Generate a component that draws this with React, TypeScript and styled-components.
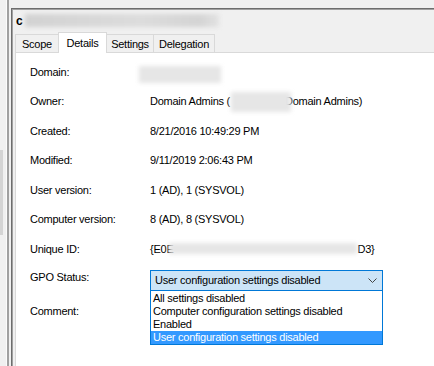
import React from "react";
import styled, { createGlobalStyle } from "styled-components";

const GlobalStyle = createGlobalStyle`
  html, body { margin: 0; padding: 0; background: #f0f0f0; }
  body {
    font-family: "Liberation Sans", Arial, sans-serif;
    font-size: 11px;
    letter-spacing: -0.25px;
    color: #000;
  }
  #root { width: 434px; height: 366px; overflow: hidden; }
`;

const Frame = styled.div`
  display: flex;
  width: 434px;
  height: 366px;
  overflow: hidden;
  background: #f0f0f0;
`;

const LeftPane = styled.div`
  width: 6px;
  flex-shrink: 0;
  display: flex;
  flex-direction: column;
  background: #f0f0f0;
`;

const Thumb = styled.div`
  margin-top: 150px;
  width: 3px;
  height: 85px;
  background: #d4d4d4;
`;

const Splitter = styled.div`
  width: 4px;
  flex-shrink: 0;
  border-left: 1px solid #fbfbfb;
  background: linear-gradient(to right, #a0a0a0 0 2px, #f0f0f0 2px);
`;

const RightPane = styled.div`
  flex: 1;
  min-width: 0;
  margin-top: 8px;
  border-top: 1px solid #6d6d6d;
  border-left: 1px solid #6d6d6d;
  box-shadow: inset 1px 1px 0 #a0a0a0;
  padding-left: 3px;
  display: flex;
  flex-direction: column;
`;

const TitleRow = styled.div`
  height: 23px;
  display: flex;
  align-items: center;
  padding-left: 1px;
  font-size: 12px;
  font-weight: bold;
  letter-spacing: 0;
`;

const TitleBlur = styled.span`
  display: inline-block;
  width: 194px;
  height: 13px;
  margin-left: 2px;
  background: linear-gradient(to right, #d2d2d2, #dcdcdc 60%, #d4d4d4 90%, #e2e2e2);
  filter: blur(2px);
`;

const TabStrip = styled.div`
  height: 20px;
  display: flex;
  align-items: flex-end;
  position: relative;
  z-index: 1;
`;

const Tab = styled.div<{ $active?: boolean; $w: number }>`
  position: relative;
  z-index: ${(p) => (p.$active ? 2 : 1)};
  box-sizing: border-box;
  width: ${(p) => p.$w}px;
  height: ${(p) => (p.$active ? 21 : 18)}px;
  margin-bottom: ${(p) => (p.$active ? -1 : 0)}px;
  margin-right: -1px;
  border: 1px solid #d9d9d9;
  border-bottom: none;
  background: ${(p) => (p.$active ? "#ffffff" : "#f0f0f0")};
  display: flex;
  align-items: center;
  justify-content: center;
  font-size: 11px;
  white-space: nowrap;
`;

const Panel = styled.div`
  flex: 1;
  background: #ffffff;
  border-top: 1px solid #d9d9d9;
  border-left: 1px solid #d9d9d9;
  padding: 11.5px 0 0 14px;
  display: flex;
  flex-direction: column;
`;

const Row = styled.div<{ $h: number }>`
  display: grid;
  grid-template-columns: 120px auto;
  height: ${(p) => p.$h}px;
  align-items: start;
  line-height: 14px;
`;

const Label = styled.div`
  white-space: nowrap;
`;

const Value = styled.div`
  display: flex;
  align-items: flex-start;
  white-space: nowrap;
`;

const Blur = styled.span<{ $w: number; $h: number; $dx?: number; $dy?: number; $mr?: number }>`
  position: relative;
  z-index: 1;
  display: inline-block;
  flex-shrink: 0;
  width: ${(p) => p.$w}px;
  height: ${(p) => p.$h}px;
  margin-left: ${(p) => p.$dx ?? 0}px;
  margin-top: ${(p) => p.$dy ?? 0}px;
  margin-right: ${(p) => p.$mr ?? 0}px;
  background: #e6e6e6;
  filter: blur(2px);
`;

const SelectWrap = styled.div`
  position: relative;
  width: 233px;
`;

const SelectBox = styled.div`
  box-sizing: border-box;
  height: 21px;
  border: 1px solid #0078d7;
  background: #cce4f7;
  padding: 0 5px 0 4px;
  display: flex;
  align-items: center;
  justify-content: space-between;
  line-height: 19px;
`;

const DropList = styled.div`
  position: absolute;
  top: 100%;
  left: 0;
  box-sizing: border-box;
  width: 233px;
  background: #ffffff;
  border: 1px solid #0078d7;
  border-top: none;
  padding-top: 1px;
  z-index: 5;
`;

const DropItem = styled.div<{ $selected?: boolean }>`
  height: 13px;
  line-height: 13px;
  padding-left: 2px;
  background: ${(p) => (p.$selected ? "#3399ff" : "transparent")};
  color: ${(p) => (p.$selected ? "#ffffff" : "#000000")};
  white-space: nowrap;
`;

const Chevron = () => (
  <svg width="9" height="6" viewBox="0 0 9 6">
    <polyline points="0.5,0.5 4.5,4.5 8.5,0.5" fill="none" stroke="#444" strokeWidth="1" />
  </svg>
);

export default function App() {
  return (
    <>
      <GlobalStyle />
      <Frame>
        <LeftPane>
          <Thumb />
        </LeftPane>
        <Splitter />
        <RightPane>
          <TitleRow>
            c<TitleBlur />
          </TitleRow>
          <TabStrip>
            <Tab $w={44}>Scope</Tab>
            <Tab $w={49} $active>Details</Tab>
            <Tab $w={48}>Settings</Tab>
            <Tab $w={62}>Delegation</Tab>
          </TabStrip>
          <Panel>
            <Row $h={29.5}>
              <Label>Domain:</Label>
              <Value>
                <Blur $w={82} $h={17} $dx={-11} $dy={1} />
              </Value>
            </Row>
            <Row $h={29.5}>
              <Label>Owner:</Label>
              <Value>
                Domain Admins (
                <Blur $w={60} $h={20} $dx={1} $dy={-2} $mr={-6} />
                Domain Admins)
              </Value>
            </Row>
            <Row $h={29.5}>
              <Label>Created:</Label>
              <Value>8/21/2016 10:49:29 PM</Value>
            </Row>
            <Row $h={29.5}>
              <Label>Modified:</Label>
              <Value>9/11/2019 2:06:43 PM</Value>
            </Row>
            <Row $h={29.5}>
              <Label>User version:</Label>
              <Value>1 (AD), 1 (SYSVOL)</Value>
            </Row>
            <Row $h={29.5}>
              <Label>Computer version:</Label>
              <Value>8 (AD), 8 (SYSVOL)</Value>
            </Row>
            <Row $h={28.5}>
              <Label>Unique ID:</Label>
              <Value>
                {"{E0E"}
                <Blur $w={188} $h={11} $dx={-4} $dy={1.5} />
                {"D3}"}
              </Value>
            </Row>
            <Row $h={33.5}>
              <Label>GPO Status:</Label>
              <Value>
                <SelectWrap>
                  <SelectBox>
                    <span>User configuration settings disabled</span>
                    <Chevron />
                  </SelectBox>
                  <DropList>
                    <DropItem>All settings disabled</DropItem>
                    <DropItem>Computer configuration settings disabled</DropItem>
                    <DropItem>Enabled</DropItem>
                    <DropItem $selected>User configuration settings disabled</DropItem>
                  </DropList>
                </SelectWrap>
              </Value>
            </Row>
            <Row $h={30}>
              <Label>Comment:</Label>
              <Value />
            </Row>
          </Panel>
        </RightPane>
      </Frame>
    </>
  );
}
